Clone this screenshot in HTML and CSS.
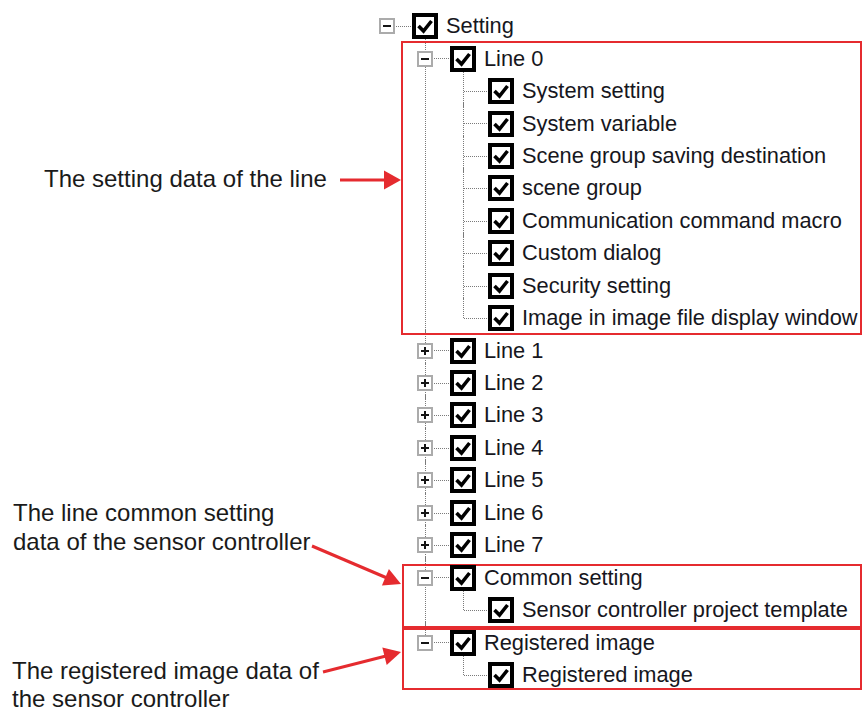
FILE: index.html
```html
<!DOCTYPE html>
<html lang="en">
<head>
  <meta charset="UTF-8">
  <meta name="viewport" content="width=device-width, initial-scale=1.0">
  <title>Setting data tree</title>
  <link rel="stylesheet" href="styles.css">
</head>
<body>
  <div class="page">
    <div class="notes">
      <p class="note note-line">The setting data of the line</p>
      <p class="note note-common">The line common setting<br>data of the sensor controller</p>
      <p class="note note-image">The registered image data of<br>the sensor controller</p>
    </div>

    <ul class="tree">
      <li class="node">
        <div class="row"><span class="exp minus"></span><svg class="cb" viewBox="0 0 26 26"><rect x="2" y="2" width="22" height="22"/><path d="M6.5 13 L11.5 18 L19.5 8"/></svg><span class="label">Setting</span></div>
        <ul class="kids">
          <li class="node">
            <div class="row"><span class="exp minus"></span><svg class="cb" viewBox="0 0 26 26"><rect x="2" y="2" width="22" height="22"/><path d="M6.5 13 L11.5 18 L19.5 8"/></svg><span class="label">Line 0</span></div>
            <ul class="kids">
              <li class="node"><div class="row"><span class="exp none"></span><svg class="cb" viewBox="0 0 26 26"><rect x="2" y="2" width="22" height="22"/><path d="M6.5 13 L11.5 18 L19.5 8"/></svg><span class="label">System setting</span></div></li>
              <li class="node"><div class="row"><span class="exp none"></span><svg class="cb" viewBox="0 0 26 26"><rect x="2" y="2" width="22" height="22"/><path d="M6.5 13 L11.5 18 L19.5 8"/></svg><span class="label">System variable</span></div></li>
              <li class="node"><div class="row"><span class="exp none"></span><svg class="cb" viewBox="0 0 26 26"><rect x="2" y="2" width="22" height="22"/><path d="M6.5 13 L11.5 18 L19.5 8"/></svg><span class="label">Scene group saving destination</span></div></li>
              <li class="node"><div class="row"><span class="exp none"></span><svg class="cb" viewBox="0 0 26 26"><rect x="2" y="2" width="22" height="22"/><path d="M6.5 13 L11.5 18 L19.5 8"/></svg><span class="label">scene group</span></div></li>
              <li class="node"><div class="row"><span class="exp none"></span><svg class="cb" viewBox="0 0 26 26"><rect x="2" y="2" width="22" height="22"/><path d="M6.5 13 L11.5 18 L19.5 8"/></svg><span class="label">Communication command macro</span></div></li>
              <li class="node"><div class="row"><span class="exp none"></span><svg class="cb" viewBox="0 0 26 26"><rect x="2" y="2" width="22" height="22"/><path d="M6.5 13 L11.5 18 L19.5 8"/></svg><span class="label">Custom dialog</span></div></li>
              <li class="node"><div class="row"><span class="exp none"></span><svg class="cb" viewBox="0 0 26 26"><rect x="2" y="2" width="22" height="22"/><path d="M6.5 13 L11.5 18 L19.5 8"/></svg><span class="label">Security setting</span></div></li>
              <li class="node"><div class="row"><span class="exp none"></span><svg class="cb" viewBox="0 0 26 26"><rect x="2" y="2" width="22" height="22"/><path d="M6.5 13 L11.5 18 L19.5 8"/></svg><span class="label">Image in image file display window</span></div></li>
            </ul>
          </li>
          <li class="node"><div class="row"><span class="exp plus"></span><svg class="cb" viewBox="0 0 26 26"><rect x="2" y="2" width="22" height="22"/><path d="M6.5 13 L11.5 18 L19.5 8"/></svg><span class="label">Line 1</span></div></li>
          <li class="node"><div class="row"><span class="exp plus"></span><svg class="cb" viewBox="0 0 26 26"><rect x="2" y="2" width="22" height="22"/><path d="M6.5 13 L11.5 18 L19.5 8"/></svg><span class="label">Line 2</span></div></li>
          <li class="node"><div class="row"><span class="exp plus"></span><svg class="cb" viewBox="0 0 26 26"><rect x="2" y="2" width="22" height="22"/><path d="M6.5 13 L11.5 18 L19.5 8"/></svg><span class="label">Line 3</span></div></li>
          <li class="node"><div class="row"><span class="exp plus"></span><svg class="cb" viewBox="0 0 26 26"><rect x="2" y="2" width="22" height="22"/><path d="M6.5 13 L11.5 18 L19.5 8"/></svg><span class="label">Line 4</span></div></li>
          <li class="node"><div class="row"><span class="exp plus"></span><svg class="cb" viewBox="0 0 26 26"><rect x="2" y="2" width="22" height="22"/><path d="M6.5 13 L11.5 18 L19.5 8"/></svg><span class="label">Line 5</span></div></li>
          <li class="node"><div class="row"><span class="exp plus"></span><svg class="cb" viewBox="0 0 26 26"><rect x="2" y="2" width="22" height="22"/><path d="M6.5 13 L11.5 18 L19.5 8"/></svg><span class="label">Line 6</span></div></li>
          <li class="node"><div class="row"><span class="exp plus"></span><svg class="cb" viewBox="0 0 26 26"><rect x="2" y="2" width="22" height="22"/><path d="M6.5 13 L11.5 18 L19.5 8"/></svg><span class="label">Line 7</span></div></li>
          <li class="node">
            <div class="row"><span class="exp minus"></span><svg class="cb" viewBox="0 0 26 26"><rect x="2" y="2" width="22" height="22"/><path d="M6.5 13 L11.5 18 L19.5 8"/></svg><span class="label">Common setting</span></div>
            <ul class="kids">
              <li class="node"><div class="row"><span class="exp none"></span><svg class="cb" viewBox="0 0 26 26"><rect x="2" y="2" width="22" height="22"/><path d="M6.5 13 L11.5 18 L19.5 8"/></svg><span class="label">Sensor controller project template</span></div></li>
            </ul>
          </li>
          <li class="node">
            <div class="row"><span class="exp minus"></span><svg class="cb" viewBox="0 0 26 26"><rect x="2" y="2" width="22" height="22"/><path d="M6.5 13 L11.5 18 L19.5 8"/></svg><span class="label">Registered image</span></div>
            <ul class="kids">
              <li class="node"><div class="row"><span class="exp none"></span><svg class="cb" viewBox="0 0 26 26"><rect x="2" y="2" width="22" height="22"/><path d="M6.5 13 L11.5 18 L19.5 8"/></svg><span class="label">Registered image</span></div></li>
            </ul>
          </li>
        </ul>
      </li>
    </ul>

    <!-- callout boxes and arrows drawn over the tree -->
    <svg class="marks" viewBox="0 0 863 711">
      <rect x="402" y="42" width="459" height="292"/>
      <rect x="403" y="565" width="458" height="62"/>
      <rect x="403" y="629" width="458" height="60"/>
      <line x1="340" y1="180" x2="386" y2="180"/>
      <polygon points="384,170.5 401,180 384,189.5"/>
      <line x1="312" y1="546" x2="387" y2="578"/>
      <polygon points="388.9,569 401,584 381.9,585.6"/>
      <line x1="323" y1="672" x2="386" y2="656"/>
      <polygon points="386.7,664.9 401,652 382.3,647.5"/>
    </svg>
  </div>
</body>
</html>
```

FILE: styles.css
```css
/* Tree of setting data with callouts */
body {
  margin: 0;
  background: #fff;
  font-family: "Liberation Sans", Arial, sans-serif;
}
.page {
  position: relative;
  display: flex;
  width: 863px;
  height: 711px;
  overflow: hidden;
}

/* left column notes */
.notes {
  flex: none;
  width: 379px;
  color: #1a1a1a;
  font-size: 24px;
  line-height: 28.4px;
}
.note {
  margin: 0;
  white-space: nowrap;
}
.note-line {
  margin-top: 164.7px;
  padding-left: 44px;
}
.note-common {
  margin-top: 306.3px;
  padding-left: 13px;
}
.note-image {
  margin-top: 100.5px;
  padding-left: 12px;
}

/* tree view */
.tree,
.kids {
  list-style: none;
  margin: 0;
}
.tree {
  padding: 10px 0 0 0;
}
.kids {
  padding-left: 38px;
}
.node {
  position: relative;
}
.kids > .node::before {
  content: "";
  position: absolute;
  left: 8px;
  top: -4px;
  bottom: 0;
  border-left: 1px dotted #7a7a7a;
}
.kids > .node:last-child::before {
  bottom: auto;
  height: 20.2px;
}
.row {
  position: relative;
  display: flex;
  align-items: center;
  height: 32.45px;
}
.row::before {
  content: "";
  position: absolute;
  left: 9px;
  width: 23px;
  top: 16px;
  border-top: 1px dotted #7a7a7a;
}
.exp {
  position: relative;
  z-index: 1;
  flex: none;
  box-sizing: border-box;
  width: 16px;
  height: 16px;
  margin-right: 17px;
}
.minus,
.plus {
  border: 2px solid #ababab;
  background: #fff;
}
.minus::after,
.plus::after {
  content: "";
  position: absolute;
  left: 2px;
  top: 5px;
  width: 8px;
  height: 2px;
  background: #151515;
}
.plus::before {
  content: "";
  position: absolute;
  left: 5px;
  top: 2px;
  width: 2px;
  height: 8px;
  background: #151515;
}
.cb {
  position: relative;
  z-index: 1;
  flex: none;
  width: 26px;
  height: 26px;
}
.cb rect {
  fill: #fff;
  stroke: #000;
  stroke-width: 4;
}
.cb path {
  fill: none;
  stroke: #000;
  stroke-width: 3.6;
}
.label {
  margin-left: 8px;
  color: #161620;
  font-size: 21.8px;
  white-space: nowrap;
}

/* callouts */
.marks {
  position: absolute;
  left: 0;
  top: 0;
  width: 863px;
  height: 711px;
  pointer-events: none;
}
.marks rect {
  fill: none;
  stroke: #e52b2f;
  stroke-width: 2;
}
.marks line {
  stroke: #e52b2f;
  stroke-width: 3;
}
.marks polygon {
  fill: #e52b2f;
}
```
